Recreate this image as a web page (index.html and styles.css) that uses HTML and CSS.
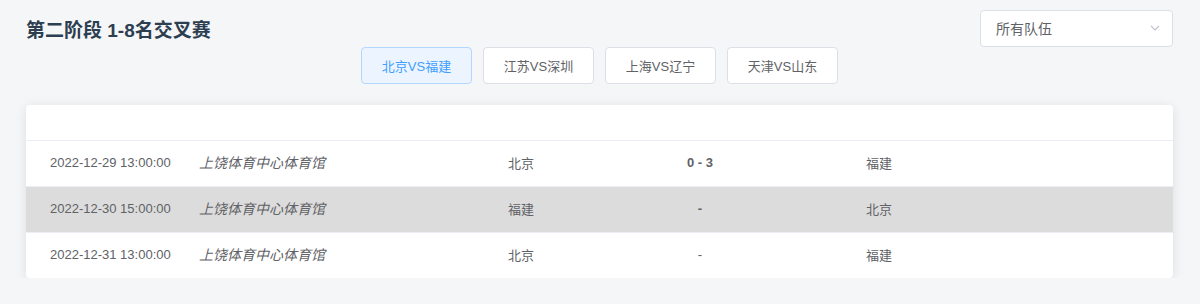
FILE: index.html
```html
<!DOCTYPE html>
<html lang="zh-CN">
  <head>
    <meta charset="UTF-8" />
    <title>第二阶段 1-8名交叉赛</title>
    <link rel="stylesheet" href="styles.css">
  </head>
  <body>
    <div class="page">
      <div class="top-bar">
        <h2 class="stage-title">第二阶段 1-8名交叉赛</h2>
        <div class="team-select">
          <span>所有队伍</span>
          <svg class="arrow" width="10" height="6" viewBox="0 0 10 6">
            <path d="M1 1 L5 5 L9 1" fill="none" stroke="#c0c4cc" stroke-width="1.2" />
          </svg>
        </div>
      </div>

      <!-- 对阵切换 -->
      <div class="match-tabs">
        <button class="tab active">北京VS福建</button>
        <button class="tab">江苏VS深圳</button>
        <button class="tab">上海VS辽宁</button>
        <button class="tab">天津VS山东</button>
      </div>

      <div class="card">
        <div class="row head"></div>
        <div class="row">
          <div class="col-date">2022-12-29 13:00:00</div>
          <div class="col-venue">上饶体育中心体育馆</div>
          <div class="col-team">北京</div>
          <div class="col-score"><b>0 - 3</b></div>
          <div class="col-team">福建</div>
        </div>
        <div class="row current">
          <div class="col-date">2022-12-30 15:00:00</div>
          <div class="col-venue">上饶体育中心体育馆</div>
          <div class="col-team">福建</div>
          <div class="col-score"><b>-</b></div>
          <div class="col-team">北京</div>
        </div>
        <div class="row">
          <div class="col-date">2022-12-31 13:00:00</div>
          <div class="col-venue">上饶体育中心体育馆</div>
          <div class="col-team">北京</div>
          <div class="col-score">-</div>
          <div class="col-team">福建</div>
        </div>
      </div>
    </div>
  </body>
</html>
```

FILE: styles.css
```css
body {
  margin: 0;
  background: #f5f6f8;
  font-family: "Liberation Sans", Arial, "Noto Sans CJK SC", sans-serif;
  color: #606266;
}

.page {
  padding: 9px 27px 0 26px;
}

.top-bar {
  display: flex;
  justify-content: space-between;
  align-items: center;
  height: 38px;
}

.stage-title {
  margin: 0;
  font-size: 19px;
  font-weight: bold;
  color: #2c3e50;
}

.team-select {
  box-sizing: border-box;
  width: 193px;
  height: 37px;
  display: flex;
  align-items: center;
  justify-content: space-between;
  padding: 0 12px 0 15px;
  background: white;
  border: 1px solid #dcdfe6;
  border-radius: 4px;
  font-size: 14px;
  color: #606266;
}

.match-tabs {
  display: flex;
  justify-content: center;
  gap: 11px;
}

.tab {
  box-sizing: border-box;
  width: 111px;
  height: 37px;
  padding: 0;
  background: white;
  border: 1px solid #dcdfe6;
  border-radius: 4px;
  font-family: inherit;
  font-size: 13px;
  color: #606266;
}

.tab.active {
  background: #ecf5ff;
  border-color: #b3d8ff;
  color: #409eff;
}

.card {
  margin-top: 21px;
  background: white;
  border-radius: 4px;
  box-shadow: 0 2px 12px 0 rgba(0, 0, 0, 0.1);
  overflow: hidden;
}

.row {
  display: grid;
  grid-template-columns: 149px 309px 74px 284px 1fr;
  align-items: center;
  height: 46px;
  padding-bottom: 3px;
  box-sizing: border-box;
  border-bottom: 1px solid #ebeef5;
  font-size: 13px;
}

.row:last-child {
  border-bottom: none;
  height: 45px;
}

.row.head {
  height: 36px;
}

.row.current {
  background: #dcdcdc;
}

.col-date,
.col-venue,
.col-team {
  padding-left: 24px;
}

.col-venue {
  font-style: italic;
  font-size: 14px;
}

.col-score {
  text-align: center;
}
```
